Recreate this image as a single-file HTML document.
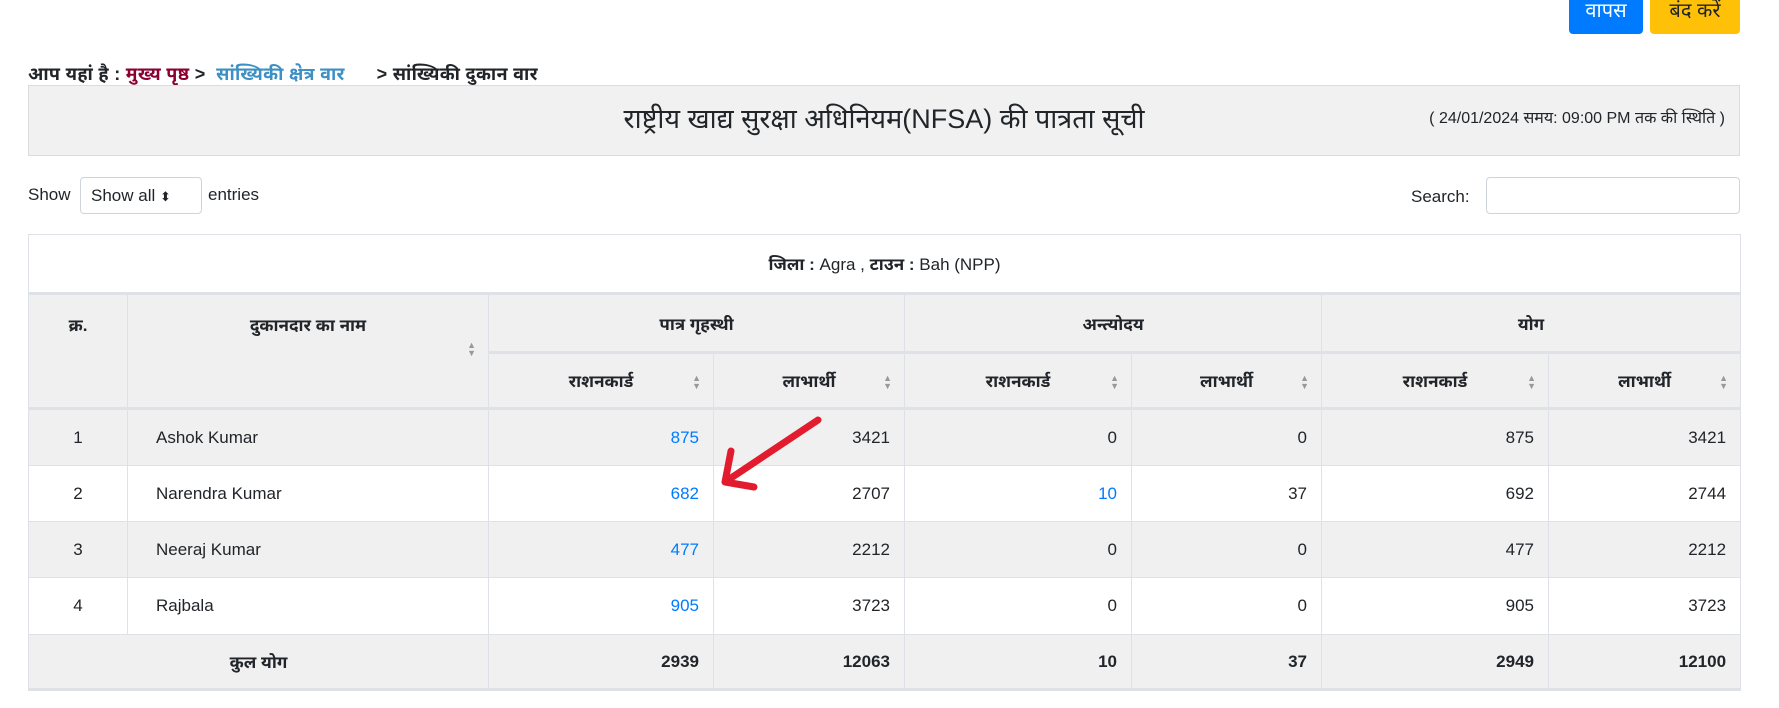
<!DOCTYPE html>
<html><head><meta charset="utf-8"><style>
body{margin:0;width:1779px;height:708px;background:#fff;font-family:"Liberation Sans","Noto Sans",sans-serif;color:#212529;position:relative;overflow:hidden;font-size:17px}
.abs{position:absolute}
.btn{position:absolute;top:-6px;height:40px;border-radius:4px;color:#fff;font-size:20px;line-height:34px;text-align:center}
table{position:absolute;left:28px;top:234px;width:1712px;border-collapse:collapse;table-layout:fixed;font-size:17px}
td,th{border:1px solid #dee2e6;padding:0 14px}
th{font-weight:bold;background:#f0f0f0;position:relative}
.g td{background:#f0f0f0}
.r{text-align:right}.c{text-align:center}
a{color:#007bff;text-decoration:none}
.s{position:absolute;right:12px;font-size:9px;color:#999;line-height:8px}
</style></head><body>
<div class="btn" style="left:1569px;width:74px;background:#007bff">वापस</div>
<div class="btn" style="left:1650px;width:90px;background:#ffc107;color:#212529">बंद करें</div>
<div class="abs" style="left:28px;top:62px;font-weight:bold;font-size:18px;letter-spacing:0.3px">आप यहां है : <span style="color:#8b0030">मुख्य पृष्ठ</span> &gt; &nbsp;<span style="color:#3d8fc4">सांख्यिकी क्षेत्र वार</span> &nbsp; &nbsp; &nbsp;&gt; सांख्यिकी दुकान वार</div>
<div class="abs" style="left:28px;top:85px;width:1710px;height:69px;background:#f1f1f1;border:1px solid #dcdcdc"></div>
<div class="abs" style="left:28px;top:99px;width:1712px;text-align:center;font-size:27px">राष्ट्रीय खाद्य सुरक्षा अधिनियम(NFSA) की पात्रता सूची</div>
<div class="abs" style="right:54px;top:106px;font-size:16px">( 24/01/2024 समय: 09:00 PM तक की स्थिति )</div>
<div class="abs" style="left:28px;top:185px">Show</div>
<div class="abs" style="left:80px;top:177px;width:122px;height:37px;border:1px solid #ced4da;border-radius:4px;box-sizing:border-box;padding:8px 10px">Show all <span style="font-size:13px">&#x2B0D;</span></div>
<div class="abs" style="left:208px;top:185px">entries</div>
<div class="abs" style="left:1411px;top:187px">Search:</div>
<div class="abs" style="left:1486px;top:177px;width:254px;height:37px;border:1px solid #ced4da;border-radius:4px;box-sizing:border-box"></div>
<table>
<colgroup><col style="width:99px"><col style="width:361px"><col style="width:225px"><col style="width:191px"><col style="width:227px"><col style="width:190px"><col style="width:227px"><col style="width:192px"></colgroup>
<tr style="height:59px"><td colspan="8" class="c" style="border-bottom:3px solid #dee2e6"><b>जिला :</b> Agra , <b>टाउन :</b> Bah (NPP)</td></tr>
<tr style="height:59px"><th rowspan="2" style="vertical-align:top;padding-top:18px">क्र.</th><th rowspan="2" style="vertical-align:top;padding-top:18px">दुकानदार का नाम<span class="s" style="top:46px">▲<br>▼</span></th><th colspan="2" style="border-bottom:3px solid #dee2e6">पात्र गृहस्थी</th><th colspan="2" style="border-bottom:3px solid #dee2e6">अन्त्योदय</th><th colspan="2" style="border-bottom:3px solid #dee2e6">योग</th></tr>
<tr style="height:56px"><th>राशनकार्ड<span class="s" style="top:20px">▲<br>▼</span></th><th>लाभार्थी<span class="s" style="top:20px">▲<br>▼</span></th><th>राशनकार्ड<span class="s" style="top:20px">▲<br>▼</span></th><th>लाभार्थी<span class="s" style="top:20px">▲<br>▼</span></th><th>राशनकार्ड<span class="s" style="top:20px">▲<br>▼</span></th><th>लाभार्थी<span class="s" style="top:20px">▲<br>▼</span></th></tr>
<tr class="g" style="height:57px;border-top:3px solid #dee2e6"><td class="c">1</td><td style="padding-left:28px">Ashok Kumar</td><td class="r"><a>875</a></td><td class="r">3421</td><td class="r">0</td><td class="r">0</td><td class="r">875</td><td class="r">3421</td></tr>
<tr style="height:56px"><td class="c">2</td><td style="padding-left:28px">Narendra Kumar</td><td class="r"><a>682</a></td><td class="r">2707</td><td class="r"><a>10</a></td><td class="r">37</td><td class="r">692</td><td class="r">2744</td></tr>
<tr class="g" style="height:56px"><td class="c">3</td><td style="padding-left:28px">Neeraj Kumar</td><td class="r"><a>477</a></td><td class="r">2212</td><td class="r">0</td><td class="r">0</td><td class="r">477</td><td class="r">2212</td></tr>
<tr style="height:57px"><td class="c">4</td><td style="padding-left:28px">Rajbala</td><td class="r"><a>905</a></td><td class="r">3723</td><td class="r">0</td><td class="r">0</td><td class="r">905</td><td class="r">3723</td></tr>
<tr class="g" style="height:55px;font-weight:bold;border-bottom:3px solid #dee2e6"><td colspan="2" class="c">कुल योग</td><td class="r">2939</td><td class="r">12063</td><td class="r">10</td><td class="r">37</td><td class="r">2949</td><td class="r">12100</td></tr>
</table>
<svg class="abs" style="left:0;top:0" width="1779" height="708"><path d="M818 420 L725 482 M731 451 L725 482 L754 487" stroke="#e31b2e" stroke-width="7" fill="none" stroke-linecap="round" stroke-linejoin="round"/></svg>
</body></html>
